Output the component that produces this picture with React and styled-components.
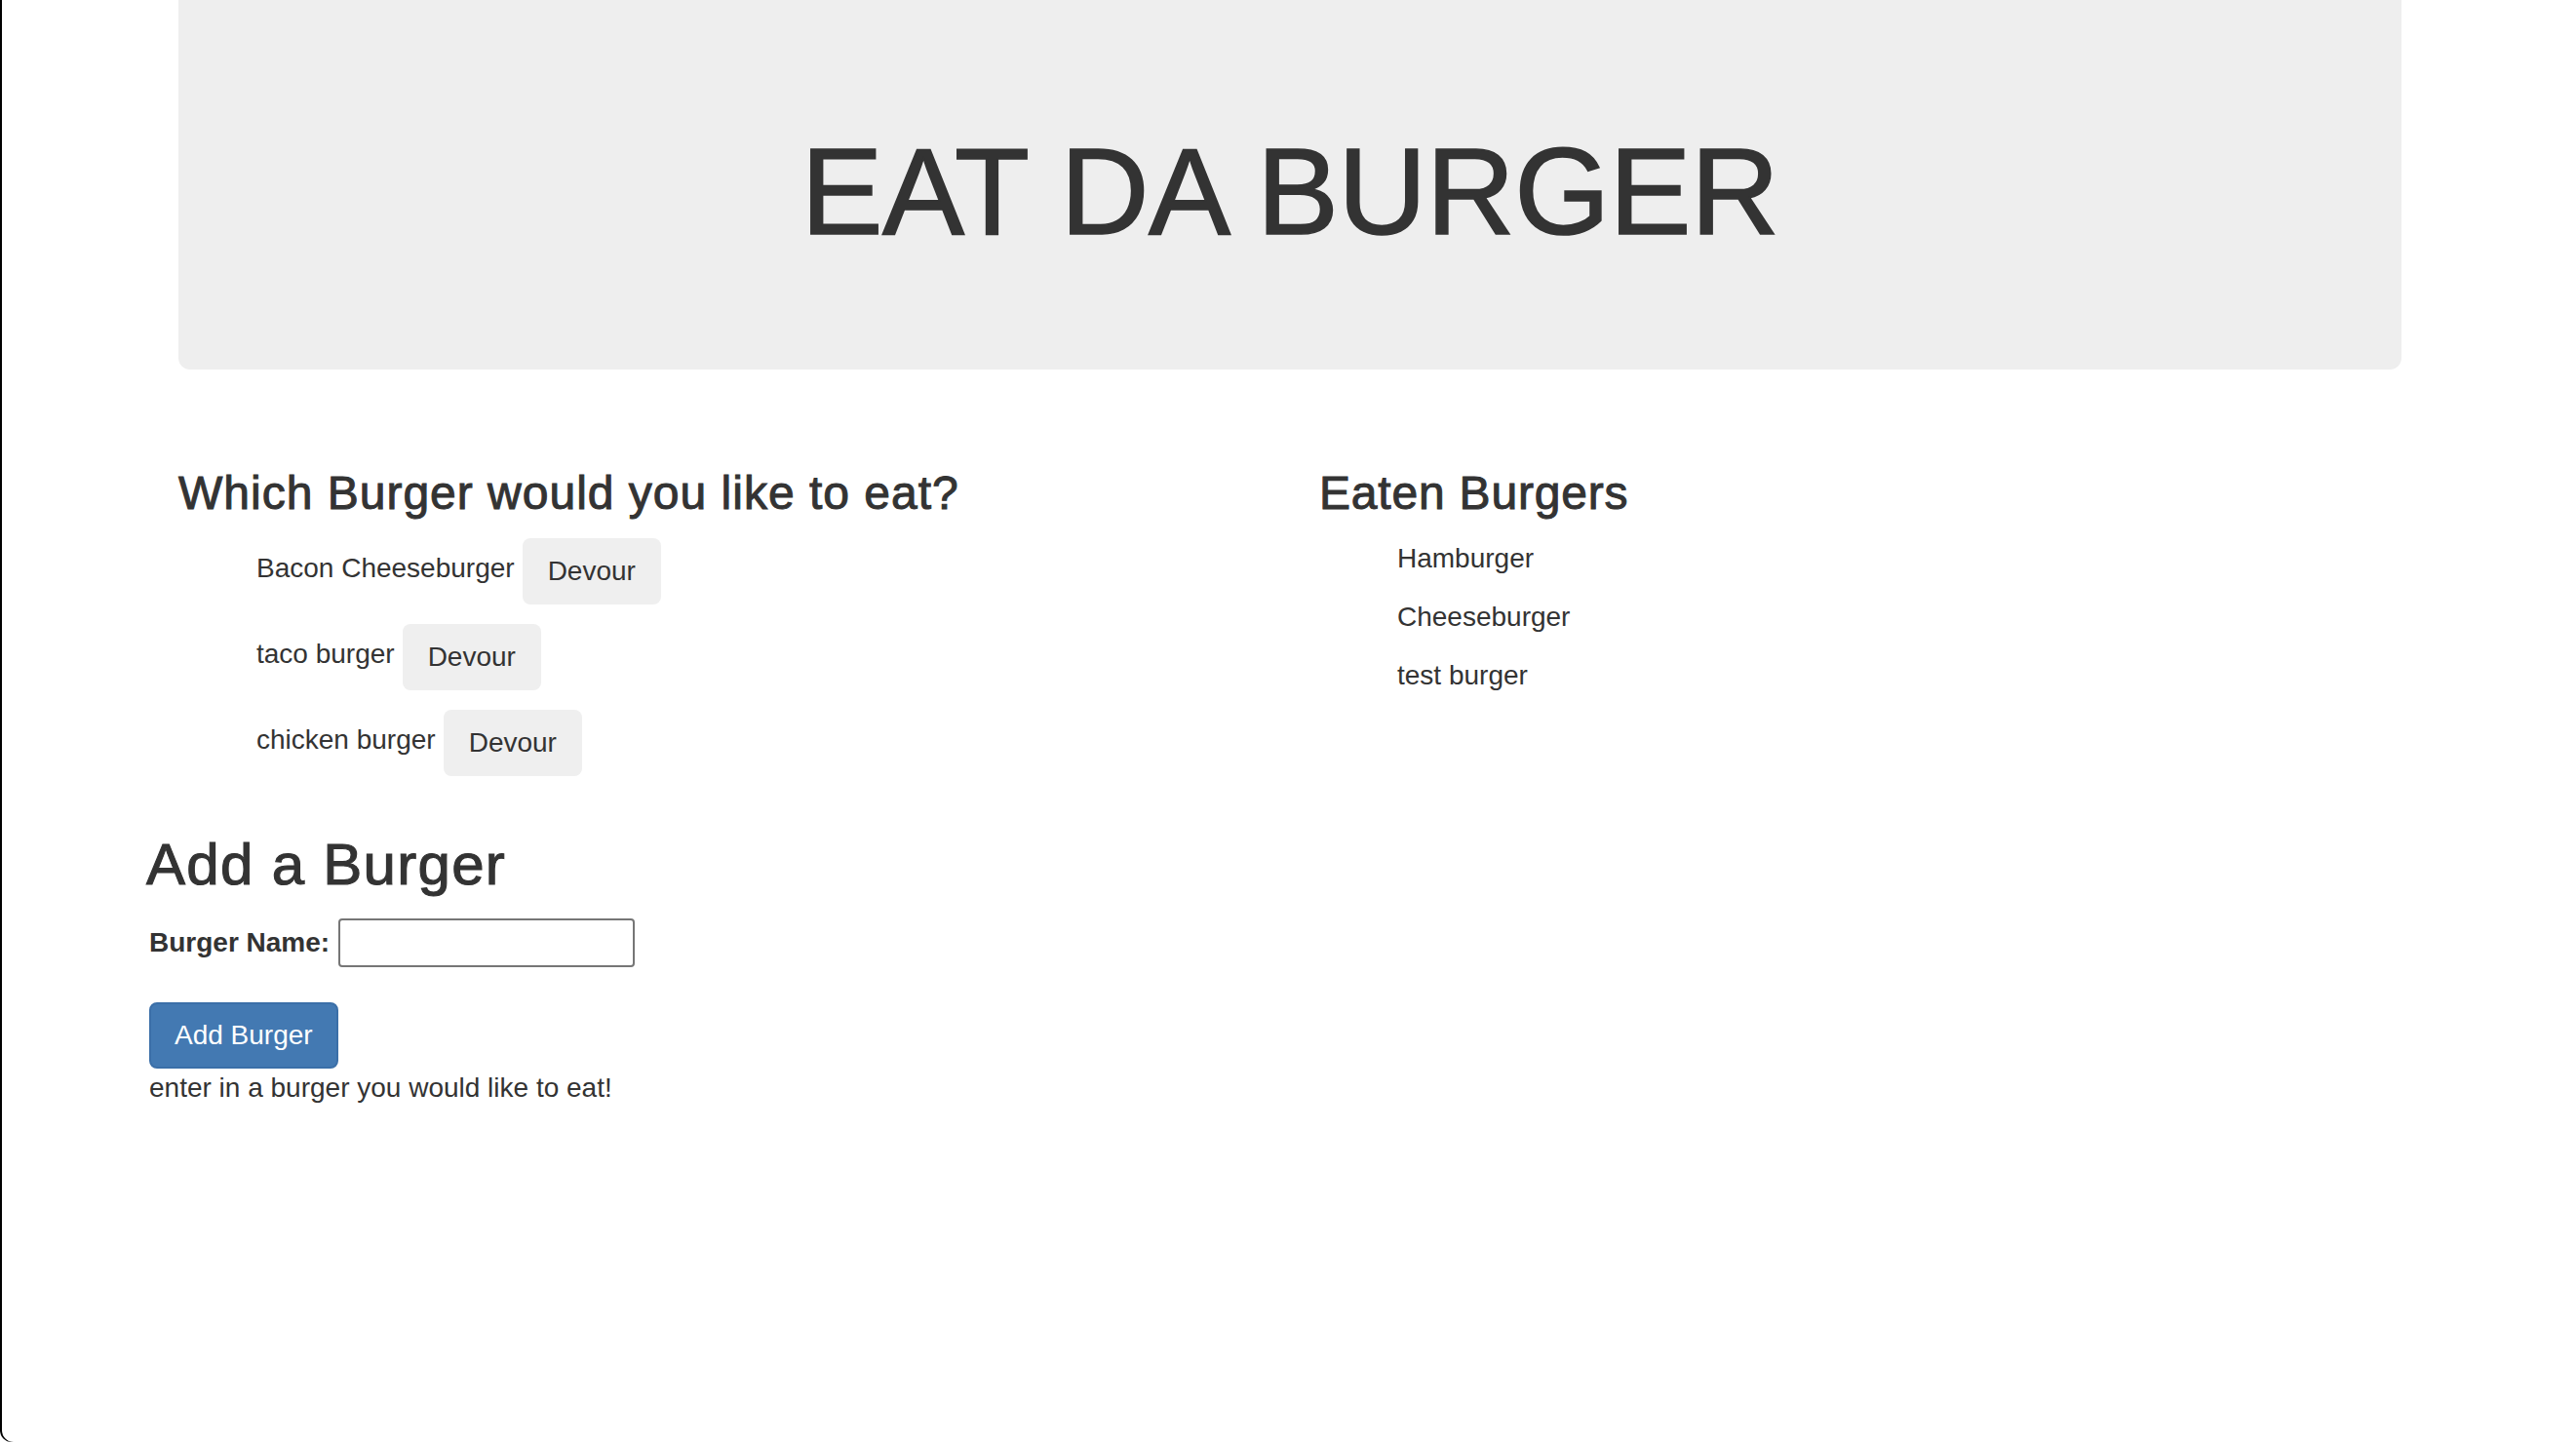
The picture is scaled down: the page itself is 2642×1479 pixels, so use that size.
import styled, { createGlobalStyle } from "styled-components"

const GlobalStyle = createGlobalStyle`
    html, body {
        margin: 0;
        padding: 0;
        background: #fff;
    }
    body {
        font-family: "Liberation Sans", Arial, sans-serif;
        font-size: 28px;
        line-height: 40px;
        color: #333;
    }
`

const Page = styled.div`
    min-height: 100vh;
    box-sizing: border-box;
    box-shadow: inset 2px 0 0 #000;
    border-bottom-left-radius: 12px;
    overflow: hidden;
`

const Container = styled.div`
    width: 2280px;
    margin-left: 183px;
`

const Jumbotron = styled.div`
    background: #eee;
    border-radius: 0 0 12px 12px;
    padding: 128px 0 112px;
    text-align: center;
`

const BigTitle = styled.h1`
    margin: 0;
    font-size: 126px;
    line-height: 1.1;
    font-weight: 400;
    letter-spacing: -0.6px;
    -webkit-text-stroke: 1.6px #333;
`

const Row = styled.div`
    display: grid;
    grid-template-columns: 1170px 1170px;
    margin-top: 101px;
`

const Column = styled.div`
    display: flex;
    flex-direction: column;
`

const Heading = styled.h3`
    margin: 0;
    font-size: 48px;
    line-height: 1.1;
    font-weight: 400;
    letter-spacing: ${props => props.$wide ? "1px" : "0.8px"};
    -webkit-text-stroke: 1px #333;
`

const List = styled.ul`
    margin: 0;
    padding: ${props => props.$eaten ? "21px 0 0 80px" : "20px 0 0 80px"};
    list-style: none;
    display: flex;
    flex-direction: column;
    gap: 20px;
`

const BurgerItem = styled.li`
    display: flex;
    align-items: flex-start;
    gap: 8px;
    height: ${props => props.$eaten ? "40px" : "68px"};
`

const BurgerName = styled.span`
    margin-top: ${props => props.$eaten ? "0" : "11px"};
`

const Button = styled.button`
    font-family: inherit;
    font-size: 28px;
    line-height: 40px;
    padding: 12px 24px;
    border: 2px solid ${props => props.$primary ? "#3b6fa8" : "transparent"};
    border-radius: 8px;
    background: ${props => props.$primary ? "#4379b2" : "#efefef"};
    color: ${props => props.$primary ? "#fff" : "#333"};
    cursor: pointer;
`

const FormSection = styled.div`
    margin-top: 58px;
    padding-left: 153px;
    display: flex;
    flex-direction: column;
    align-items: flex-start;
`

const SubTitle = styled.h2`
    margin: 0 0 22px -3px;
    font-size: 60px;
    line-height: 1.1;
    font-weight: 400;
    letter-spacing: 1.3px;
    -webkit-text-stroke: 1.1px #333;
`

const FieldRow = styled.div`
    display: flex;
    align-items: center;
    gap: 9px;
    height: 50px;
`

const Label = styled.label`
    font-weight: 700;
`

const Input = styled.input`
    box-sizing: border-box;
    width: 304px;
    height: 50px;
    border: 2px solid #767676;
    border-radius: 4px;
    font-family: inherit;
    font-size: 28px;
    padding: 0 6px;
`

const SubmitRow = styled.div`
    margin-top: 36px;
`

const Hint = styled.p`
    margin: 0;
`

const waiting = ["Bacon Cheeseburger", "taco burger", "chicken burger"]
const eaten = ["Hamburger", "Cheeseburger", "test burger"]

const App = () => {
    return (
        <Page>
            <GlobalStyle />
            <Container>
                <Jumbotron>
                    <BigTitle>EAT DA BURGER</BigTitle>
                </Jumbotron>
                <Row>
                    <Column>
                        <Heading $wide>Which Burger would you like to eat?</Heading>
                        <List>
                            {waiting.map(name => (
                                <BurgerItem key={name}>
                                    <BurgerName>{name}</BurgerName>
                                    <Button type="button">Devour</Button>
                                </BurgerItem>
                            ))}
                        </List>
                    </Column>
                    <Column>
                        <Heading>Eaten Burgers</Heading>
                        <List $eaten>
                            {eaten.map(name => (
                                <BurgerItem key={name} $eaten>
                                    <BurgerName $eaten>{name}</BurgerName>
                                </BurgerItem>
                            ))}
                        </List>
                    </Column>
                </Row>
            </Container>
            <FormSection>
                <SubTitle>Add a Burger</SubTitle>
                <FieldRow>
                    <Label htmlFor="burger-name">Burger Name:</Label>
                    <Input id="burger-name" type="text" />
                </FieldRow>
                <SubmitRow>
                    <Button type="submit" $primary>Add Burger</Button>
                </SubmitRow>
                <Hint>enter in a burger you would like to eat!</Hint>
            </FormSection>
        </Page>
    )
}

export default App
